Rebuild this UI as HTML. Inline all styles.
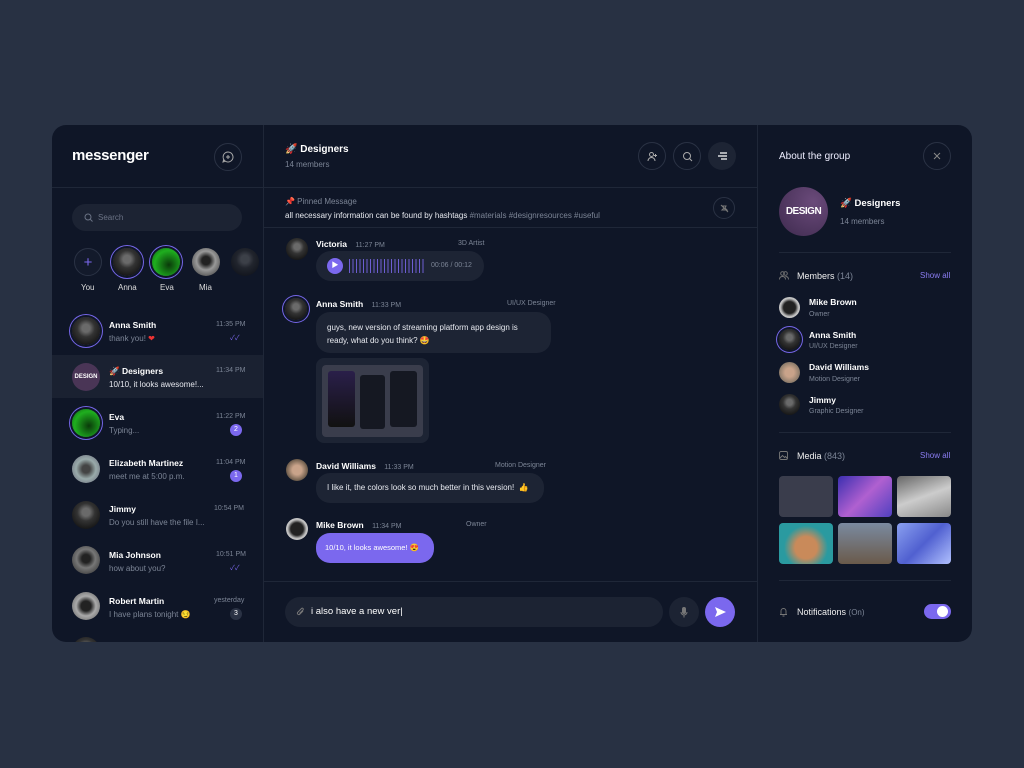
<!DOCTYPE html>
<html><head><meta charset="utf-8"><style>
*{box-sizing:border-box;margin:0;padding:0}
body{width:1024px;height:768px;background:#283143;font-family:"Liberation Sans","Noto Sans CJK SC",sans-serif;position:relative;overflow:hidden;color:#fff}
.a{position:absolute}
.panel{left:52px;top:125px;width:920px;height:517px;background:#0f1627;border-radius:14px;overflow:hidden}
.vl{position:absolute;top:0;bottom:0;width:1px;background:#1f2738}
.hl{position:absolute;height:1px;background:#1f2738}
.circ{border-radius:50%;border:1px solid #2a3244;display:flex;align-items:center;justify-content:center}
.av{border-radius:50%;background:radial-gradient(circle at 50% 40%,#6a6a6a 0 18%,#333 40%,#181818 75%)}
.ring{box-shadow:0 0 0 2px #0f1627,0 0 0 3px #7566e8}
.n{font-size:8.5px;font-weight:bold;color:#fff;white-space:nowrap}
.s{font-size:8px;color:#7c8596;white-space:nowrap}
.t{font-size:7px;color:#7c8596;white-space:nowrap}
.badge{width:12px;height:12px;border-radius:50%;background:#7b68ee;font-size:7px;text-align:center;line-height:12px;color:#fff}
.bub{background:#1d2434;border-radius:14px;font-size:8px;color:#e8eaf0}
svg{display:block}
</style></head><body>
<div class="a panel">
 <div class="vl" style="left:211px"></div>
 <div class="vl" style="left:705px"></div>
 <div class="hl" style="left:0;width:705px;top:62px"></div>
 <div class="hl" style="left:212px;width:493px;top:102px"></div>
 <div class="hl" style="left:212px;width:493px;top:456px"></div>

 <!-- left -->
 <div class="a" style="left:20px;top:22px;font-size:15px;font-weight:bold;letter-spacing:-0.3px">messenger</div>
 <div class="a circ" style="left:162px;top:18px;width:28px;height:28px"><svg width="12" height="12" viewBox="0 0 12 12" fill="none" stroke="#aaa" stroke-width="1"><path d="M6 1a5 5 0 1 1-4.3 7.5L1 11l2.4-.8A5 5 0 0 1 6 1z"/><path d="M6 4v4M4 6h4"/></svg></div>
 <div class="a" style="left:20px;top:79px;width:170px;height:27px;border-radius:14px;background:#1c2333"></div>
 <div class="a" style="left:32px;top:88px"><svg width="9" height="9" viewBox="0 0 9 9" fill="none" stroke="#6b7385" stroke-width="1"><circle cx="4" cy="4" r="3"/><path d="M6.2 6.2L8.5 8.5"/></svg></div>
 <div class="a s" style="left:46px;top:88px;color:#6b7385">Search</div>
 <div class="a circ" style="left:22px;top:123px;width:28px;height:28px;background:#131a2b;color:#7b68ee;font-size:15px">+</div>
 <div class="a av ring" style="left:61px;top:123px;width:28px;height:28px"></div>
 <div class="a ring" style="left:100px;top:123px;width:28px;height:28px;border-radius:50%;background:radial-gradient(circle at 60% 60%,#0a3a0a,#1fae1f 60%,#0c5e0c)"></div>
 <div class="a av" style="left:140px;top:123px;width:28px;height:28px;background:radial-gradient(circle at 50% 45%,#222 0 20%,#999 45%,#555 80%)"></div>
 <div class="a av" style="left:179px;top:123px;width:28px;height:28px;opacity:.5"></div>
 <div class="a s" style="left:29px;top:158px;color:#ddd">You</div>
 <div class="a s" style="left:66px;top:158px;color:#ddd">Anna</div>
 <div class="a s" style="left:108px;top:158px;color:#ddd">Eva</div>
 <div class="a s" style="left:147px;top:158px;color:#ddd">Mia</div>

 <div class="a" style="left:0;top:230px;width:211px;height:43px;background:#1a2131"></div>
 <div class="a av ring" style="left:20px;top:192px;width:28px;height:28px"></div>
 <div class="a n" style="left:57px;top:195px">Anna Smith</div><div class="a t" style="left:164px;top:196px">11:35 PM</div>
 <div class="a s" style="left:57px;top:209px">thank you! <span style="color:#e33">❤</span></div><div class="a t" style="left:178px;top:208px;color:#7b68ee">✓✓</div>

 <div class="a" style="left:20px;top:238px;width:28px;height:28px;border-radius:50%;background:#4a3556;font-size:6px;font-weight:bold;text-align:center;line-height:28px">DESIGN</div>
 <div class="a n" style="left:57px;top:241px">🚀 Designers</div><div class="a t" style="left:164px;top:242px">11:34 PM</div>
 <div class="a s" style="left:57px;top:255px;color:#e5e7ee">10/10, it looks awesome!...</div>

 <div class="a ring" style="left:20px;top:284px;width:28px;height:28px;border-radius:50%;background:radial-gradient(circle at 60% 60%,#0a3a0a,#1fae1f 60%,#0c5e0c)"></div>
 <div class="a n" style="left:57px;top:287px">Eva</div><div class="a t" style="left:164px;top:288px">11:22 PM</div>
 <div class="a s" style="left:57px;top:301px">Typing...</div><div class="a badge" style="left:178px;top:299px">2</div>

 <div class="a av" style="left:20px;top:330px;width:28px;height:28px;background:radial-gradient(circle,#444 0 20%,#9aa 50%,#667)"></div>
 <div class="a n" style="left:57px;top:333px">Elizabeth Martinez</div><div class="a t" style="left:164px;top:334px">11:04 PM</div>
 <div class="a s" style="left:57px;top:347px">meet me at 5:00 p.m.</div><div class="a badge" style="left:178px;top:345px">1</div>

 <div class="a av" style="left:20px;top:376px;width:28px;height:28px"></div>
 <div class="a n" style="left:57px;top:379px">Jimmy</div><div class="a t" style="left:162px;top:380px">10:54 PM</div>
 <div class="a s" style="left:57px;top:393px">Do you still have the file I...</div>

 <div class="a av" style="left:20px;top:421px;width:28px;height:28px;background:radial-gradient(circle at 50% 45%,#222 0 20%,#777 45%,#444 80%)"></div>
 <div class="a n" style="left:57px;top:425px">Mia Johnson</div><div class="a t" style="left:164px;top:426px">10:51 PM</div>
 <div class="a s" style="left:57px;top:439px">how about you?</div><div class="a t" style="left:178px;top:438px;color:#7b68ee">✓✓</div>

 <div class="a av" style="left:20px;top:467px;width:28px;height:28px;background:radial-gradient(circle,#222 0 25%,#aaa 50%,#555)"></div>
 <div class="a n" style="left:57px;top:471px">Robert Martin</div><div class="a t" style="left:162px;top:472px">yesterday</div>
 <div class="a s" style="left:57px;top:485px">I have plans tonight 😏</div><div class="a badge" style="left:178px;top:483px;background:#2a3244">3</div>
 <div class="a av" style="left:20px;top:512px;width:28px;height:28px"></div>

 <!-- center -->
 <div class="a" style="left:233px;top:19px;font-size:10px;font-weight:bold">🚀 Designers</div>
 <div class="a s" style="left:233px;top:35px">14 members</div>
 <div class="a circ" style="left:586px;top:17px;width:28px;height:28px"><svg width="11" height="11" viewBox="0 0 11 11" fill="none" stroke="#aaa" stroke-width="1"><circle cx="4.5" cy="3.5" r="2"/><path d="M1 10c0-2 1.5-3.5 3.5-3.5S8 8 8 10M8.5 3v3M7 4.5h3"/></svg></div>
 <div class="a circ" style="left:621px;top:17px;width:28px;height:28px"><svg width="11" height="11" viewBox="0 0 11 11" fill="none" stroke="#aaa" stroke-width="1"><circle cx="5" cy="5" r="3.5"/><path d="M7.6 7.6L10 10"/></svg></div>
 <div class="a" style="left:656px;top:17px;width:28px;height:28px;border-radius:50%;background:#1d2434;display:flex;align-items:center;justify-content:center"><svg width="10" height="8" viewBox="0 0 10 8" stroke="#fff" stroke-width="1.2"><path d="M3 1h7M1 4h9M4 7h6"/></svg></div>
 <div class="a s" style="left:233px;top:72px">📌 Pinned Message</div>
 <div class="a" style="left:233px;top:86px;font-size:8px;color:#e8eaf0;white-space:nowrap">all necessary information can be found by hashtags <span style="color:#7c8596">#materials #designresources #useful</span></div>
 <div class="a circ" style="left:661px;top:72px;width:22px;height:22px"><svg width="9" height="9" viewBox="0 0 9 9" fill="none" stroke="#777" stroke-width="1"><path d="M1 1l7 7M3 2h3l-1 2 2 2H2l2-2z"/></svg></div>

 <div class="a av" style="left:234px;top:113px;width:22px;height:22px"></div>
 <div class="a n" style="left:264px;top:114px">Victoria <span class="t" style="font-weight:normal;margin-left:6px">11:27 PM</span></div>
 <div class="a t" style="left:406px;top:115px">3D Artist</div>
 <div class="a bub" style="left:264px;top:126px;width:168px;height:30px;border-radius:15px"></div>
 <div class="a" style="left:275px;top:133px;width:16px;height:16px;border-radius:50%;background:#7b68ee;font-size:7px;text-align:center;line-height:16px">▶</div>
 <div class="a" style="left:297px;top:134px;width:75px;height:14px;background:repeating-linear-gradient(90deg,#7b68ee 0 1px,transparent 1px 3.5px);opacity:.85"></div>
 <div class="a t" style="left:379px;top:137px">00:06 / 00:12</div>

 <div class="a av ring" style="left:233px;top:173px;width:22px;height:22px"></div>
 <div class="a n" style="left:264px;top:174px">Anna Smith <span class="t" style="font-weight:normal;margin-left:6px">11:33 PM</span></div>
 <div class="a t" style="left:455px;top:175px">UI/UX Designer</div>
 <div class="a bub" style="left:264px;top:187px;width:235px;height:41px;padding:9px 11px;line-height:13px">guys, new version of streaming platform app design is ready, what do you think? 🤩</div>
 <div class="a" style="left:264px;top:233px;width:113px;height:85px;border-radius:8px;background:#1d2434"></div>
 <div class="a" style="left:270px;top:240px;width:101px;height:72px;border-radius:4px;background:#3a3d4c"></div>
 <div class="a" style="left:276px;top:246px;width:27px;height:56px;border-radius:3px;background:linear-gradient(#2a1f4a,#111)"></div>
 <div class="a" style="left:308px;top:250px;width:25px;height:54px;border-radius:3px;background:#151822"></div>
 <div class="a" style="left:338px;top:246px;width:27px;height:56px;border-radius:3px;background:#151822"></div>

 <div class="a av" style="left:234px;top:334px;width:22px;height:22px;background:radial-gradient(circle,#c9a38a 0 30%,#6a5a4a 70%)"></div>
 <div class="a n" style="left:264px;top:336px">David Williams <span class="t" style="font-weight:normal;margin-left:6px">11:33 PM</span></div>
 <div class="a t" style="left:443px;top:337px">Motion Designer</div>
 <div class="a bub" style="left:264px;top:348px;width:228px;height:30px;padding:10px 11px;white-space:nowrap">I like it, the colors look so much better in this version! &nbsp;👍</div>

 <div class="a av" style="left:234px;top:393px;width:22px;height:22px;background:radial-gradient(circle,#222 0 40%,#bbb 60%,#eee)"></div>
 <div class="a n" style="left:264px;top:395px">Mike Brown <span class="t" style="font-weight:normal;margin-left:6px">11:34 PM</span></div>
 <div class="a t" style="left:414px;top:396px">Owner</div>
 <div class="a bub" style="left:264px;top:408px;width:118px;height:30px;padding:10px 9px;background:#7b68ee;color:#fff;white-space:nowrap;font-size:7.5px">10/10, it looks awesome! 😍</div>

 <div class="a" style="left:233px;top:472px;width:378px;height:30px;border-radius:15px;background:#1c2333"></div>
 <div class="a" style="left:244px;top:482px"><svg width="9" height="10" viewBox="0 0 9 10" fill="none" stroke="#777" stroke-width="1"><path d="M7 4L3.5 7.5a1.5 1.5 0 0 1-2-2L5.5 1.5a1 1 0 0 1 1.5 1.5L3.5 6.5"/></svg></div>
 <div class="a" style="left:259px;top:481px;font-size:9.5px;color:#fff">i also have a new ver|</div>
 <div class="a" style="left:617px;top:472px;width:30px;height:30px;border-radius:50%;background:#1c2333;display:flex;align-items:center;justify-content:center"><svg width="8" height="11" viewBox="0 0 8 11" fill="none" stroke="#777" stroke-width="1"><rect x="2.5" y="0.5" width="3" height="6" rx="1.5" fill="#777"/><path d="M1 5a3 3 0 0 0 6 0M4 8v2.5"/></svg></div>
 <div class="a" style="left:653px;top:472px;width:30px;height:30px;border-radius:50%;background:#7b68ee;display:flex;align-items:center;justify-content:center"><svg width="11" height="10" viewBox="0 0 11 10"><path d="M0 0l11 5-11 5 2-5z" fill="#fff"/></svg></div>

 <!-- right -->
 <div class="a" style="left:727px;top:26px;font-size:10px;color:#eef">About the group</div>
 <div class="a circ" style="left:871px;top:17px;width:28px;height:28px"><svg width="8" height="8" viewBox="0 0 8 8" stroke="#888" stroke-width="1"><path d="M1 1l6 6M7 1L1 7"/></svg></div>
 <div class="a" style="left:727px;top:62px;width:49px;height:49px;border-radius:50%;background:radial-gradient(circle at 70% 30%,#6a4a7a,#3e2a4e);font-size:10px;font-weight:bold;text-align:center;line-height:49px;letter-spacing:-0.5px">DESIGN</div>
 <div class="a" style="left:788px;top:73px;font-size:9.5px;font-weight:bold">🚀 Designers</div>
 <div class="a s" style="left:788px;top:92px">14 members</div>
 <div class="hl" style="left:727px;width:172px;top:127px"></div>
 <div class="a" style="left:727px;top:146px"><svg width="10" height="9" viewBox="0 0 10 9" fill="none" stroke="#777" stroke-width="0.9"><circle cx="3.5" cy="2.5" r="1.8"/><circle cx="6.5" cy="2.5" r="1.8"/><path d="M0.5 8.5c0-2 1.3-3 3-3s3 1 3 3M6.5 5.5c1.7 0 3 1 3 3"/></svg></div>
 <div class="a s" style="left:745px;top:146px;font-size:9px;color:#eee">Members <span style="color:#7c8596">(14)</span></div>
 <div class="a" style="left:868px;top:146px;font-size:8px;color:#8a7cf0">Show all</div>
 <div class="a av" style="left:727px;top:172px;width:21px;height:21px;background:radial-gradient(circle,#222 0 40%,#bbb 60%,#eee)"></div>
 <div class="a n" style="left:757px;top:172px">Mike Brown</div><div class="a t" style="left:757px;top:186px">Owner</div>
 <div class="a av ring" style="left:727px;top:204px;width:21px;height:21px"></div>
 <div class="a n" style="left:757px;top:205px">Anna Smith</div><div class="a t" style="left:757px;top:218px">UI/UX Designer</div>
 <div class="a av" style="left:727px;top:237px;width:21px;height:21px;background:radial-gradient(circle,#c9a38a 0 30%,#8a7a6a 70%)"></div>
 <div class="a n" style="left:757px;top:237px">David Williams</div><div class="a t" style="left:757px;top:251px">Motion Designer</div>
 <div class="a av" style="left:727px;top:269px;width:21px;height:21px"></div>
 <div class="a n" style="left:757px;top:270px">Jimmy</div><div class="a t" style="left:757px;top:283px">Graphic Designer</div>
 <div class="hl" style="left:727px;width:172px;top:307px"></div>
 <div class="a" style="left:727px;top:326px"><svg width="9" height="9" viewBox="0 0 9 9" fill="none" stroke="#777" stroke-width="0.9"><rect x="0.5" y="0.5" width="8" height="8" rx="1.5"/><path d="M1 7l2.5-2.5 2 2 1-1 2 2"/></svg></div>
 <div class="a s" style="left:745px;top:326px;font-size:9px;color:#eee">Media <span style="color:#7c8596">(843)</span></div>
 <div class="a" style="left:868px;top:326px;font-size:8px;color:#8a7cf0">Show all</div>
 <div class="a" style="left:727px;top:351px;width:54px;height:41px;border-radius:4px;background:#3a3d4c"></div>
 <div class="a" style="left:786px;top:351px;width:54px;height:41px;border-radius:4px;background:linear-gradient(135deg,#3b2fb0,#b060d0,#5040c0)"></div>
 <div class="a" style="left:845px;top:351px;width:54px;height:41px;border-radius:4px;background:linear-gradient(160deg,#666,#ccc 50%,#888)"></div>
 <div class="a" style="left:727px;top:398px;width:54px;height:41px;border-radius:4px;background:radial-gradient(circle at 50% 60%,#c98a5a 0 30%,#2a9aa0 60%)"></div>
 <div class="a" style="left:786px;top:398px;width:54px;height:41px;border-radius:4px;background:linear-gradient(#7a8aa0,#6a5a4a)"></div>
 <div class="a" style="left:845px;top:398px;width:54px;height:41px;border-radius:4px;background:linear-gradient(135deg,#8aa0f0,#5060d0,#b0c0ff)"></div>
 <div class="hl" style="left:727px;width:172px;top:455px"></div>
 <div class="a" style="left:727px;top:482px"><svg width="9" height="10" viewBox="0 0 9 10" fill="none" stroke="#777" stroke-width="0.9"><path d="M1 7.5h7M2 7.5V4a2.5 2.5 0 0 1 5 0v3.5M3.5 9h2"/></svg></div>
 <div class="a s" style="left:745px;top:482px;font-size:9px;color:#eee">Notifications <span style="color:#7c8596;font-size:8px">(On)</span></div>
 <div class="a" style="left:872px;top:479px;width:27px;height:15px;border-radius:8px;background:#7b68ee"></div>
 <div class="a" style="left:885px;top:481px;width:11px;height:11px;border-radius:50%;background:#fff"></div>
</div>
</body></html>
